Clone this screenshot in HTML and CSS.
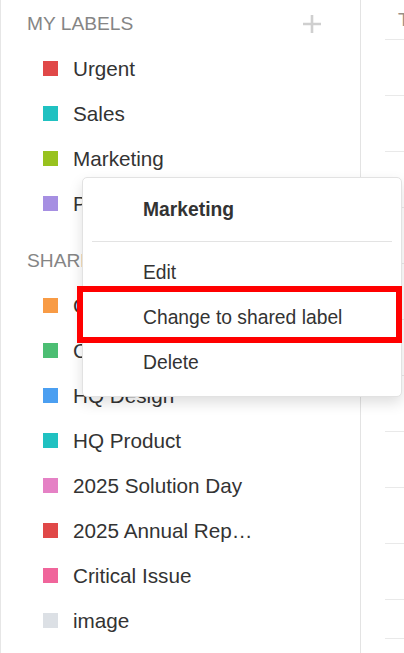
FILE: index.html
```html
<!DOCTYPE html>
<html>
<head>
<meta charset="utf-8">
<link rel="stylesheet" href="styles.css">
</head>
<body>
<div class="app">
  <aside class="sidebar">
    <section class="section">
      <div class="section-head">
        <span>MY LABELS</span>
        <svg class="plus" width="18" height="18" viewBox="0 0 18 18"><path d="M9 0v18M0 9h18" stroke="#cfcfcf" stroke-width="2.6"/></svg>
      </div>
      <div class="item"><span class="sq c-red"></span><span class="name">Urgent</span></div>
      <div class="item"><span class="sq c-teal"></span><span class="name">Sales</span></div>
      <div class="item"><span class="sq c-lime"></span><span class="name">Marketing</span></div>
      <div class="item"><span class="sq c-purple"></span><span class="name">Partners</span></div>
    </section>
    <section class="section shared">
      <div class="section-head"><span>SHARED LABELS</span></div>
      <div class="item"><span class="sq c-orange"></span><span class="name">Customer Success</span></div>
      <div class="item"><span class="sq c-green"></span><span class="name">Corporate</span></div>
      <div class="item"><span class="sq c-blue"></span><span class="name">HQ Design</span></div>
      <div class="item"><span class="sq c-teal"></span><span class="name">HQ Product</span></div>
      <div class="item"><span class="sq c-pink"></span><span class="name">2025 Solution Day</span></div>
      <div class="item"><span class="sq c-red"></span><span class="name">2025 Annual Rep…</span></div>
      <div class="item"><span class="sq c-rose"></span><span class="name">Critical Issue</span></div>
      <div class="item"><span class="sq c-gray"></span><span class="name">image</span></div>
    </section>
  </aside>
  <main class="list">
    <div class="list-head">Title</div>
    <div class="row"></div><div class="row"></div><div class="row"></div><div class="row"></div>
    <div class="row"></div><div class="row"></div><div class="row"></div><div class="row"></div>
    <div class="row"></div><div class="row"></div>
    <div class="row last"></div>
  </main>

  <div class="menu">
    <div class="menu-title">Marketing</div>
    <div class="menu-divider"></div>
    <div class="menu-item">Edit</div>
    <div class="menu-item">Change to shared label</div>
    <div class="menu-item">Delete</div>
  </div>
  <div class="highlight"></div>
</div>
</body>
</html>
```

FILE: styles.css
```css
html, body {
  margin: 0;
  padding: 0;
  background: #ffffff;
  overflow: hidden;
}
body {
  width: 404px;
  height: 653px;
  font-family: "Liberation Sans", Arial, sans-serif;
  color: #333333;
}
.app {
  position: relative;
  display: flex;
  width: 404px;
  height: 653px;
  overflow: hidden;
}
.sidebar {
  width: 359px;
  flex: none;
  border-left: 1px solid #e6e6e6;
  border-right: 1px solid #e3e3e3;
  padding-top: 1px;
  box-sizing: content-box;
}
.section.shared {
  margin-top: 12px;
}
.section-head {
  height: 45px;
  display: flex;
  align-items: center;
  justify-content: space-between;
  padding-left: 26px;
  padding-right: 39px;
  font-size: 19.2px;
  color: #858585;
}
.plus {
  display: block;
}
.item {
  height: 45px;
  display: flex;
  align-items: center;
  padding-left: 42px;
  font-size: 20.7px;
  color: #333333;
}
.sq {
  width: 15px;
  height: 15px;
  flex: none;
  margin-right: 15px;
}
.c-red { background: #e04848; }
.c-teal { background: #20c1c1; }
.c-lime { background: #98c21e; }
.c-purple { background: #a68fe2; }
.c-orange { background: #f89b45; }
.c-green { background: #4cbe73; }
.c-blue { background: #4b9ff1; }
.c-pink { background: #e581c5; }
.c-rose { background: #f0659b; }
.c-gray { background: #dce0e5; }

.list {
  flex: 1;
  min-width: 0;
  padding-left: 24px;
  overflow: hidden;
}
.list-head {
  height: 40px;
  border-bottom: 1px solid #e9e9e9;
  box-sizing: border-box;
  padding-left: 13px;
  padding-top: 9px;
  font-size: 19px;
  color: #9a8f86;
  white-space: nowrap;
  overflow: hidden;
}
.row {
  height: 56px;
  border-bottom: 1px solid #e9e9e9;
  box-sizing: border-box;
}
.row.last {
  height: 39px;
}

.menu {
  position: absolute;
  left: 82px;
  top: 177px;
  width: 320px;
  box-sizing: border-box;
  background: #ffffff;
  border: 1px solid #e2e2e2;
  border-radius: 5px;
  box-shadow: 0 6px 14px rgba(0, 0, 0, 0.13);
  padding: 9px 0 11px;
  font-size: 19.3px;
  color: #333333;
}
.menu-title {
  height: 45px;
  display: flex;
  align-items: center;
  padding-left: 60px;
  font-weight: bold;
}
.menu-divider {
  height: 1px;
  background: #e3e3e3;
  margin: 9px 9px 8px 9px;
}
.menu-item {
  height: 45px;
  display: flex;
  align-items: center;
  padding-left: 60px;
}
.highlight {
  position: absolute;
  left: 77px;
  top: 286px;
  width: 325px;
  height: 57px;
  box-sizing: border-box;
  border: 6px solid #ff0000;
}
```
